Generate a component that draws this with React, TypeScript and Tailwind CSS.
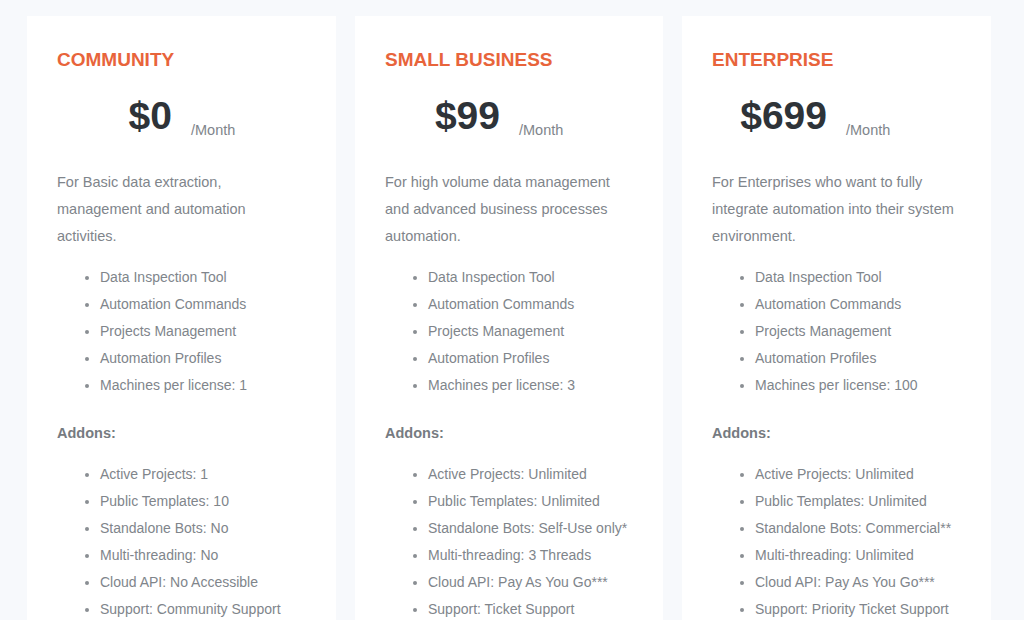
const plans = [
  {
    name: 'COMMUNITY',
    price: '$0',
    desc: 'For Basic data extraction, management and automation activities.',
    machines: '1',
    addons: [
      'Active Projects: 1',
      'Public Templates: 10',
      'Standalone Bots: No',
      'Multi-threading: No',
      'Cloud API: No Accessible',
      'Support: Community Support',
    ],
  },
  {
    name: 'SMALL BUSINESS',
    price: '$99',
    desc: 'For high volume data management and advanced business processes automation.',
    machines: '3',
    addons: [
      'Active Projects: Unlimited',
      'Public Templates: Unlimited',
      'Standalone Bots: Self-Use only*',
      'Multi-threading: 3 Threads',
      'Cloud API: Pay As You Go***',
      'Support: Ticket Support',
    ],
  },
  {
    name: 'ENTERPRISE',
    price: '$699',
    desc: 'For Enterprises who want to fully integrate automation into their system environment.',
    machines: '100',
    addons: [
      'Active Projects: Unlimited',
      'Public Templates: Unlimited',
      'Standalone Bots: Commercial**',
      'Multi-threading: Unlimited',
      'Cloud API: Pay As You Go***',
      'Support: Priority Ticket Support',
    ],
  },
]

type Plan = (typeof plans)[number]

function Bullets({ items }: { items: string[] }) {
  return (
    <ul className="list-disc pl-[43px] text-[14px] leading-[27px] text-[#80858b] marker:text-[#8a8e93]">
      {items.map((it) => (
        <li key={it}>{it}</li>
      ))}
    </ul>
  )
}

function PlanCard({ plan, wide }: { plan: Plan; wide: boolean }) {
  const features = [
    'Data Inspection Tool',
    'Automation Commands',
    'Projects Management',
    'Automation Profiles',
    `Machines per license: ${plan.machines}`,
  ]
  return (
    <div className={(wide ? 'w-[309px]' : 'w-[308px]') + ' shrink-0 bg-white pl-[30px] pr-[28px] pt-[32px]'}>
      <h2 className="text-[19px] leading-[24px] font-bold text-[#e8643b]">{plan.name}</h2>
      <div className="flex items-end mt-[24px]">
        <span className="w-[115px] text-right text-[39px] leading-[39px] font-bold text-[#2e3338]">
          {plan.price}
        </span>
        <span className="ml-[19px] text-[14.5px] leading-[17px] text-[#80858b] mb-[-4px]">/Month</span>
      </div>
      <p className="mt-[34px] text-[14.5px] leading-[27px] text-[#80858b]">{plan.desc}</p>
      <div className="mt-[14px]">
        <Bullets items={features} />
      </div>
      <p className="mt-[21px] text-[14.5px] leading-[27px] font-bold text-[#767b81]">Addons:</p>
      <div className="mt-[14px]">
        <Bullets items={plan.addons} />
      </div>
    </div>
  )
}

export default function App() {
  return (
    <div
      className="h-[620px] overflow-hidden bg-[#f7f9fc] flex gap-[19px] pl-[27px] pt-[16px]"
      style={{ fontFamily: '"Liberation Sans", Arial, sans-serif' }}
    >
      {plans.map((p, i) => (
        <PlanCard key={p.name} plan={p} wide={i !== 1} />
      ))}
    </div>
  )
}
